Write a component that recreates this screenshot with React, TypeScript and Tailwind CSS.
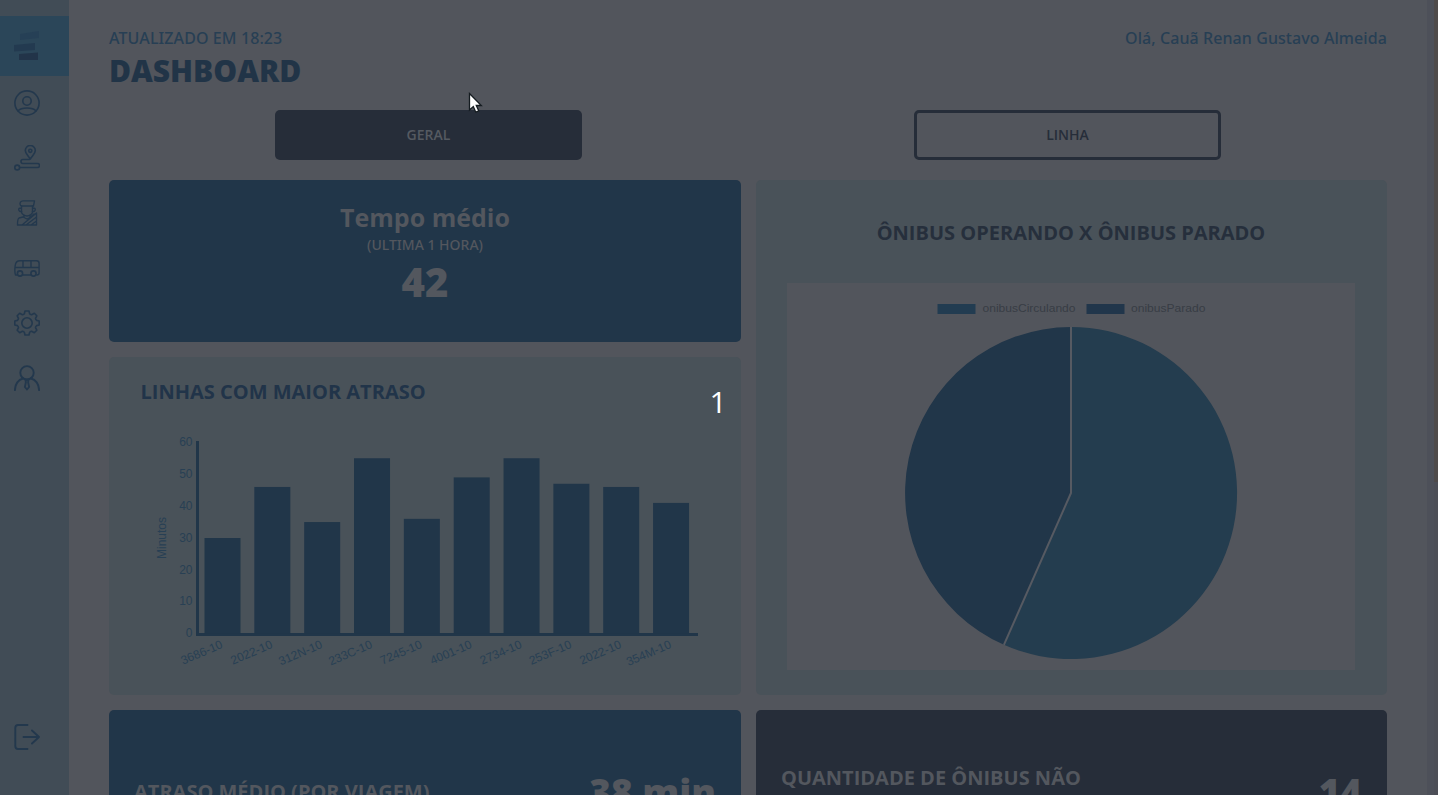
import type { ReactNode } from 'react';

const bars = [
  { line: '3686-10', minutes: 30 },
  { line: '2022-10', minutes: 46 },
  { line: '312N-10', minutes: 35 },
  { line: '233C-10', minutes: 55 },
  { line: '7245-10', minutes: 36 },
  { line: '4001-10', minutes: 49 },
  { line: '2734-10', minutes: 55 },
  { line: '253F-10', minutes: 47 },
  { line: '2022-10', minutes: 46 },
  { line: '354M-10', minutes: 41 },
];

function Icon({ children }: { children: ReactNode }) {
  return (
    <svg width="26" height="26" viewBox="0 0 26 26" fill="none" stroke="#23384d" strokeWidth="1.6" strokeLinecap="round" strokeLinejoin="round">
      {children}
    </svg>
  );
}

function Sidebar() {
  return (
    <nav className="flex h-full w-[69px] shrink-0 flex-col bg-[#414c56] pt-4">
      <div className="flex h-[60px] items-center bg-[#2b4659] pl-3.5">
        <svg width="26" height="32" viewBox="0 0 26 32">
          <path d="M6 4 25 1v7L6 10Z" fill="#264056" />
          <path d="m0 15 21-2v7L0 21.5Z" fill="#233a50" />
          <path d="m5 24 19-1.5v7.5H5Z" fill="#223449" />
        </svg>
      </div>
      <div className="mt-[14px] flex flex-col gap-[29px] pl-[13.5px]">
        <Icon>
          <circle cx="13" cy="13" r="12.1" />
          <circle cx="13" cy="11" r="4.2" />
          <path d="M4 21c2-2.5 5-3 9-3s7 .5 9 3" />
        </Icon>
        <Icon>
          <path d="M16.3 14c-2-3.5-5-5.500-5-8.500a5 5 0 0 1 10 0c0 3-3 5-5 8.500Z" />
          <circle cx="16.300" cy="5.800" r="1.600" />
          <path d="M15.500 14.500H9a2 2 0 0 0 0 4h14.500a2 2 0 0 1 0 4H6" />
          <circle cx="3.200" cy="22.500" r="2.400" />
        </Icon>
        <Icon>
          <g strokeWidth="1.350">
            <path d="M6.500 5.500C5 3 7 .8 9 .8h11.500l-1 5.200h-12Z" />
            <path d="M7.500 6v6c0 2 3 4 5.500 4s5.500-2 5.500-4V6M7.500 8C3.500 7.500 4 12 7.800 11.500M18.500 8c4-.5 3.500 4-.3 3.500" />
            <path d="M10 15.500v2l3 1.500 3-1.500v-2M9 17l-4 1c-1 .5-1.500 3-1.500 7h19V13L8 25M22.500 17 12 25M20 14l-6 5M17 25l5.500-4M3.500 25h19" />
          </g>
        </Icon>
        <Icon>
          <path d="M3 20H1.500C.5 17 .7 14 1.200 10.500 1.600 7.500 3 5.800 6 5.800h16.500c1.800 0 2.600 1 2.600 2.600V18c0 1.300-.8 2-2.300 2M9 20h8M1.200 12.500h23.500M9 6v6.500M17 6v6.500" strokeWidth="1.400" />
          <circle cx="6" cy="18.500" r="2.600" />
          <circle cx="19.500" cy="18.500" r="2.600" />
        </Icon>
        <Icon>
          <path d="M11 1h4l.6 2.600Q16 4.400 17.600 4.700L20.300 3.300 22.800 5.800 21.500 8.300Q21.500 9.600 22.600 10.400L25.200 11v4l-2.600.6Q21.600 16.300 21.500 17.700L22.800 20.200 20.300 22.700 17.600 21.300Q16 21.600 15.600 22.500L15 25h-4l-.6-2.500Q10 21.600 8.400 21.300L5.700 22.700 3.200 20.200 4.500 17.700Q4.400 16.300 3.400 15.600L.8 15v-4l2.600-.6Q4.500 9.600 4.500 8.300L3.200 5.800 5.700 3.300 8.400 4.700Q10 4.400 10.400 3.600Z" />
          <circle cx="13" cy="13" r="5.200" />
        </Icon>
        <Icon>
          <g strokeWidth="1.900">
            <circle cx="13" cy="7.800" r="6.700" />
            <path d="M.9 25.200C1 19 4.500 14.500 9 13.500M25.100 25.200C25 19 21.500 14.500 17 13.500M11.500 14.800h3l-.4 2.300 1 4.900-2.100 2.500L10.900 22l1-4.900Z" />
          </g>
        </Icon>
      </div>
      <div className="mt-auto pb-[45px] pl-[13.5px]">
        <Icon>
          <g strokeWidth="1.900">
            <path d="M13.500 1H4Q1.300 1 1.300 4v18q0 3 2.700 3h9.500M9.500 13h15.500M18 6.500l7 6.500-7 6.500" />
          </g>
        </Icon>
      </div>
    </nav>
  );
}

function BarChart() {
  return (
    <svg className="block" width="632" height="270" viewBox="109 425 632 270" fontFamily="Liberation Sans, sans-serif" fontSize="12" fill="#284054">
      {[0, 10, 20, 30, 40, 50, 60].map((v) => (
        <text key={v} x="192.500" y={637.3 - v * 3.19} textAnchor="end">{v}</text>
      ))}
      <text transform="translate(166 538) rotate(-90)" textAnchor="middle">Minutos</text>
      <path d="M197.500 441V634.500H698" fill="none" stroke="#213649" strokeWidth="3" />
      {bars.map((b, i) => {
        const x = 204.5 + i * 49.84;
        return (
          <g key={i}>
            <rect x={x} y={633.7 - b.minutes * 3.19} width="36" height={b.minutes * 3.19} fill="#213649" />
            <text transform={`translate(${x + 19} 647.5) rotate(-23)`} textAnchor="end">{b.line}</text>
          </g>
        );
      })}
    </svg>
  );
}

function PieChart() {
  return (
    <svg className="block bg-[#52555c]" width="568" height="387" viewBox="787 283 568 387" fontFamily="Liberation Sans, sans-serif" fontSize="11" fill="#383d45">
      <rect x="937.500" y="304" width="38" height="10" fill="#223c51" />
      <text x="982.500" y="312" textLength="93" lengthAdjust="spacingAndGlyphs">onibusCirculando</text>
      <rect x="1086.500" y="304" width="38" height="10" fill="#21364b" />
      <text x="1131" y="312" textLength="74.500" lengthAdjust="spacingAndGlyphs">onibusParado</text>
      <path d="M1071 493V327A166 166 0 1 1 1003.900 644.800Z" fill="#243d4f" />
      <path d="M1071 493V327A166 166 0 0 0 1003.900 644.800Z" fill="#213649" />
      <path d="M1071 327V493L1003.900 644.800" fill="none" stroke="#565a62" strokeWidth="2" strokeLinejoin="round" />
    </svg>
  );
}

export default function App() {
  return (
    <div className="relative flex h-[795px] w-[1438px] overflow-hidden bg-[#52555c] font-['Open_Sans','Noto_Sans',sans-serif]">
      <Sidebar />
      <main className="flex w-[1358px] shrink-0 flex-col pl-10 pr-10">
        <header className="flex h-[110px] shrink-0 justify-between pt-[26px] font-['Noto_Sans',sans-serif] text-base font-medium leading-6 text-[#273f54]">
          <div>
            <p className="tracking-[0.1px]">ATUALIZADO EM 18:23</p>
            <h1 className="font-['Open_Sans',sans-serif] text-[30px] font-extrabold leading-[42px] text-[#213447]">DASHBOARD</h1>
          </div>
          <p className="tracking-[0.08px]">Olá, Cauã Renan Gustavo Almeida</p>
        </header>
        <div className="grid h-[70px] w-[1278px] shrink-0 grid-cols-2 content-start justify-items-center text-sm font-semibold">
          <button className="h-[50px] w-[307px] rounded-[5px] bg-[#262d39] text-[#555a61]">GERAL</button>
          <button className="h-[50px] w-[307px] rounded-[5px] border-[3px] border-[#262d39] text-[#262d39]">LINHA</button>
        </div>
        <div className="grid w-[1278px] shrink-0 grid-cols-[632px_631px] gap-[15px]">
          <div className="flex flex-col gap-[15px]">
            <section className="flex h-[162px] flex-col items-center rounded-[5px] bg-[#213649] pt-5 text-[#53575e]">
              <h2 className="text-[25px] font-bold leading-[34px]">Tempo médio</h2>
              <p className="font-['Noto_Sans',sans-serif] text-sm font-medium leading-[21px]">(ULTIMA 1 HORA)</p>
              <p className="text-[40px] font-extrabold leading-[54px]">42</p>
            </section>
            <section className="h-[338px] overflow-hidden rounded-[5px] bg-[#495259]">
              <h2 className="h-[68px] pl-[31.5px] pt-5 text-xl font-bold leading-[30px] text-[#213449]">LINHAS COM MAIOR ATRASO</h2>
              <BarChart />
            </section>
          </div>
          <section className="flex h-[515px] flex-col rounded-[5px] bg-[#495259] pl-[31px]">
            <h2 className="h-[103px] w-[568px] pt-[38px] text-center text-xl font-bold leading-[30px] text-[#262f3c]">ÔNIBUS OPERANDO X ÔNIBUS PARADO</h2>
            <PieChart />
          </section>
          <section className="flex h-[162px] items-center justify-between rounded-[5px] bg-[#213649] px-[25px] pt-px text-[#53575e]">
            <h2 className="text-xl font-bold">ATRASO MÉDIO (POR VIAGEM)</h2>
            <p className="text-[37px] font-extrabold">38 min</p>
          </section>
          <section className="flex h-[162px] items-center justify-between rounded-[5px] bg-[#262d39] px-[25px] text-[#53575e]">
            <h2 className="w-[350px] text-xl font-bold leading-[27px]">QUANTIDADE DE ÔNIBUS NÃO OPERANDO</h2>
            <p className="pt-px text-[37px] font-extrabold">14</p>
          </section>
        </div>
      </main>
      <div className="h-full w-[7px] shrink-0 bg-[#4d5059]" />
      <div className="h-full w-1 shrink-0 bg-[#4c4e56]">
        <div className="h-[482px] w-full bg-[#4e4a4a]" />
      </div>
      <span className="absolute left-[709.500px] top-[382px] text-[30px] leading-10 text-white">1</span>
      <svg className="absolute left-[468px] top-[92px]" width="16" height="23" viewBox="0 0 16 23">
        <path d="M1.500 1.500V18l3.800-3.400 2.500 5.600 3-1.300-2.500-5.400h5Z" fill="white" stroke="#141b20" strokeWidth="1.300" />
      </svg>
    </div>
  );
}
